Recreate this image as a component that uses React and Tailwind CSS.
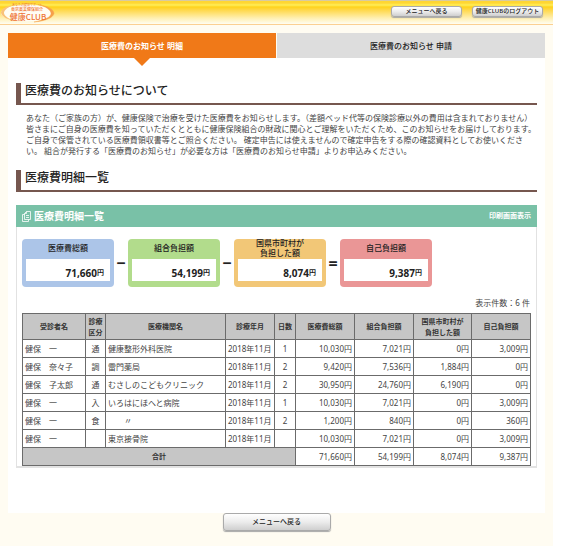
import clsx from 'clsx'

const summary = [
  { label: ['医療費総額'], value: '71,660', color: 'bg-[#acc5e8]', sign: '−' },
  { label: ['組合負担額'], value: '54,199', color: 'bg-[#b2dc8c]', sign: '−' },
  { label: ['国県市町村が', '負担した額'], value: '8,074', color: 'bg-[#f2c777]', sign: '=' },
  { label: ['自己負担額'], value: '9,387', color: 'bg-[#ea9696]' },
]

const rows = [
  ['健保　一', '通', '健康整形外科医院', '2018年11月', '1', '10,030円', '7,021円', '0円', '3,009円'],
  ['健保　奈々子', '調', '雷門薬局', '2018年11月', '2', '9,420円', '7,536円', '1,884円', '0円'],
  ['健保　子太郎', '通', 'むさしのこどもクリニック', '2018年11月', '2', '30,950円', '24,760円', '6,190円', '0円'],
  ['健保　一', '入', 'いろはにほへと病院', '2018年11月', '1', '10,030円', '7,021円', '0円', '3,009円'],
  ['健保　一', '食', '　　〃', '2018年11月', '2', '1,200円', '840円', '0円', '360円'],
  ['健保　一', '', '東京接骨院', '2018年11月', '', '10,030円', '7,021円', '0円', '3,009円'],
]

const totals = ['71,660円', '54,199円', '8,074円', '9,387円']

const cell = 'h-[18px] border border-[#6b6b6b] px-0.5 py-0 whitespace-nowrap'
const head = 'h-[26px] border border-[#6b6b6b] p-0 bg-[#c6c6c6] text-[#333] text-[7px] leading-[11px] font-bold'

function Logo() {
  return (
    <svg width="56" height="20" viewBox="0 0 56 20" role="img" aria-label="健康CLUB">
      <ellipse cx="27" cy="10" rx="26" ry="8.5" fill="#fffdf4" />
      <path d="M38 1.5C47 3 54 6 54 10.5C53 15 45 18 34 19C45 17 51 14 51 10.5C51 7 46 3.5 38 1.5Z" fill="#f6a04a" stroke="#f6a04a" strokeWidth="0.4" />
      <path d="M15 1.5C6 3 1 6 1 10C2 14 8 17 16 18C9 16 4 13 4 10C4 7 8 4 15 1.5Z" fill="#f9c27a" />
      <g fill="#ee7434" textAnchor="middle" fontFamily="'Noto Sans CJK JP', sans-serif">
        <text x="27" y="3" fontSize="3">あなたの健康サポート</text>
        <text x="27" y="8" fontSize="4" fontWeight="500">東京薬業健保組合</text>
        <text x="28" y="17" fontSize="8" fontWeight="500">健康CLUB</text>
      </g>
    </svg>
  )
}

function SmallButton({ children, className }) {
  return (
    <button
      type="button"
      className={clsx(
        'flex items-center justify-center whitespace-nowrap rounded-[3px] border border-[#aaa] bg-linear-to-b from-white via-[#ececec] to-[#cfcfcf] font-medium text-[#222] shadow-[0_1px_1px_#a8a8a8]',
        className
      )}
    >
      {children}
    </button>
  )
}

function Heading({ children }) {
  return (
    <h2 className="flex h-[22px] items-start border-b-2 border-l-[5px] border-[#76574f] pl-1 text-xs leading-4 font-medium text-[#222]">
      {children}
    </h2>
  )
}

function App() {
  return (
    <div lang="ja" className="min-h-screen bg-white pr-3.5 font-['Noto_Sans','Noto_Sans_CJK_JP',sans-serif] text-[8px] text-[#444]">
      <div className="min-h-screen bg-[#fffcf2]">
        <header className="flex h-[25px] items-start justify-between border-t border-b border-t-[#d8cba0] border-b-[#fbd092] bg-[linear-gradient(#ffd633_0px,#ffd633_2px,#ffee58_4px,#ffd21c_6px,#ffd84a_9px,#ffefb0_17px,#fffdf2_23px)] pr-2.5">
          <a href="#" className="mt-0.5 block"><Logo /></a>
          <div className="mt-[5px] flex gap-2.5">
            <SmallButton className="h-[11px] w-[71px] text-[6px]">メニューへ戻る</SmallButton>
            <SmallButton className="h-[11px] w-[71px] text-[6px]">健康CLUBのログアウト</SmallButton>
          </div>
        </header>

        <div className="px-2 pt-2">
          <nav className="grid grid-cols-2 gap-px text-center leading-[25px] font-bold">
            <a href="#" className="relative bg-[#f07918] text-white">
              医療費のお知らせ 明細
              <svg className="absolute top-full left-1/2 -translate-x-1/2" width="16" height="8" viewBox="0 0 16 8" aria-hidden="true">
                <path d="M0 0H16L8 8Z" fill="#f07918" />
              </svg>
            </a>
            <a href="#" className="bg-[#ddd] font-medium text-[#222]">医療費のお知らせ 申請</a>
          </nav>

          <main className="bg-white px-2 pt-[25px] pb-[45px]">
            <Heading>医療費のお知らせについて</Heading>
            <p className="mt-[7px] mb-3.5 pl-2.5 leading-[11px] whitespace-nowrap">
              あなた（ご家族の方）が、健康保険で治療を受けた医療費をお知らせします。（差額ベッド代等の保険診療以外の費用は含まれておりません）<br />
              皆さまにご自身の医療費を知っていただくとともに健康保険組合の財政に関心とご理解をいただくため、このお知らせをお届けしております。<br />
              ご自身で保管されている医療費領収書等とご照合ください。 確定申告には使えませんので確定申告をする際の確認資料としてお使いくださ<br />
              い。 組合が発行する「医療費のお知らせ」が必要な方は「医療費のお知らせ申請」よりお申込みください。
            </p>
            <Heading>医療費明細一覧</Heading>

            <section className="mt-[13px] border-r border-b-2 border-l border-[#e2e2e2]">
              <div className="-mx-px flex h-[22px] items-center justify-between bg-[#79c1a7] px-1.5 text-white">
                <h3 className="flex items-center gap-[3px] text-[10px] leading-none font-bold">
                  <svg width="9" height="11" viewBox="0 0 9 11" fill="none" stroke="#fff" strokeWidth="0.8" aria-hidden="true">
                    <path d="M4.5 0.5H8.5V8.5H2.5V2.5ZM4.5 0.5V2.5H2.5M2.5 3.5H0.5V10.5H6.5V8.5M4 4.5H7M4 6.5H7" />
                  </svg>
                  医療費明細一覧
                </h3>
                <a href="#" className="text-[7px] font-bold">印刷画面表示</a>
              </div>

              <div className="flex px-[5px] pt-3">
                {summary.map((item) => (
                  <div key={item.value} className="flex items-center">
                    <div className={clsx('h-12 w-[92px] rounded-[4px] px-1', item.color)}>
                      <div className="flex h-5 flex-col items-center justify-center pb-0.5 leading-[10px] font-medium text-[#222]">
                        {item.label.map((line) => (
                          <span key={line}>{line}</span>
                        ))}
                      </div>
                      <div className="flex h-[22px] items-end justify-end bg-white pr-1.5 pb-0.5 font-bold text-[#222]">
                        <span className="text-[10px] leading-3">{item.value}</span>
                        <span className="text-[7px] leading-3">円</span>
                      </div>
                    </div>
                    {item.sign && (
                      <span className="w-3.5 text-center text-base leading-none font-bold text-[#222]">{item.sign}</span>
                    )}
                  </div>
                ))}
              </div>

              <p className="mt-2.5 mb-[5px] pr-1.5 text-right leading-[11px]">表示件数：6 件</p>

              <div className="px-[5px]">
                <table className="w-full table-fixed border-collapse leading-none">
                  <colgroup>
                    <col className="w-[63px]" />
                    <col className="w-[20px]" />
                    <col className="w-[120px]" />
                    <col className="w-[49px]" />
                    <col className="w-[21px]" />
                    <col className="w-[59px]" />
                    <col className="w-[59px]" />
                    <col className="w-[58px]" />
                    <col className="w-[59px]" />
                  </colgroup>
                  <thead>
                    <tr>
                      <th className={head}>受診者名</th>
                      <th className={head}>診療<br />区分</th>
                      <th className={head}>医療機関名</th>
                      <th className={head}>診療年月</th>
                      <th className={head}>日数</th>
                      <th className={head}>医療費総額</th>
                      <th className={head}>組合負担額</th>
                      <th className={head}>国県市町村が<br />負担した額</th>
                      <th className={head}>自己負担額</th>
                    </tr>
                  </thead>
                  <tbody>
                    {rows.map((row, i) => (
                      <tr key={i}>
                        {row.map((text, j) => (
                          <td key={j} className={clsx(cell, (j === 1 || j === 4) && 'text-center', j > 4 && 'text-right')}>
                            {text}
                          </td>
                        ))}
                      </tr>
                    ))}
                  </tbody>
                  <tfoot>
                    <tr>
                      <th colSpan={5} className={clsx(cell, 'bg-[#c6c6c6] text-[7px] font-bold text-[#333]')}>合計</th>
                      {totals.map((text) => (
                        <td key={text} className={clsx(cell, 'text-right')}>{text}</td>
                      ))}
                    </tr>
                  </tfoot>
                </table>
              </div>
            </section>
          </main>

          <footer className="flex justify-center pb-3.5">
            <SmallButton className="h-[18px] w-[108px] text-[7px]">メニューへ戻る</SmallButton>
          </footer>
        </div>
      </div>
    </div>
  )
}

export default App
